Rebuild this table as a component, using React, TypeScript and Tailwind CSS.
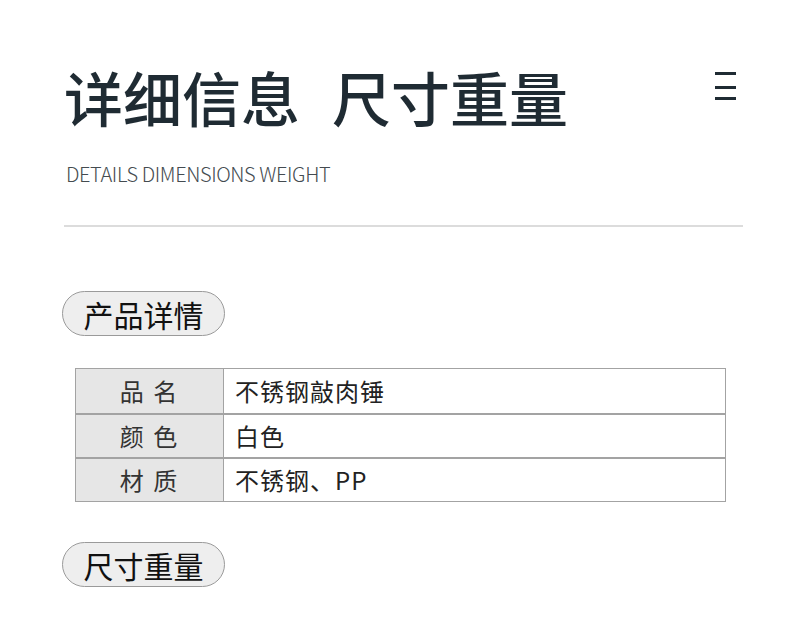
import React from 'react';

const rows = [
  { label: '品 名', value: '不锈钢敲肉锤' },
  { label: '颜 色', value: '白色' },
  { label: '材 质', value: '不锈钢、PP' },
];

const Pill: React.FC<{ text: string }> = ({ text }) => (
  <div className="inline-flex h-[45px] w-[163px] items-center justify-center rounded-full border border-[#9a9a9a] bg-[#eeeeee] text-[30px] leading-none text-[#111]">
    {text}
  </div>
);

export default function App() {
  return (
    <div
      className="h-[617px] w-[800px] bg-white"
      style={{ fontFamily: '"Noto Sans CJK SC", "Noto Sans", sans-serif' }}
    >
      <div className="px-[64px] pt-[59px]">
        <div className="flex items-start justify-between">
          <h1 className="text-[59px] font-medium leading-[76px] text-[#1f2b33]">
            详细信息<span className="ml-[32px]">尺寸重量</span>
          </h1>
          <div className="mt-[13px] flex w-[21px] flex-col">
            <span className="h-[3px] bg-[#1f2b33]" />
            <span className="mt-[11px] h-[3px] bg-[#1f2b33]" />
            <span className="mt-[8px] h-[3px] bg-[#1f2b33]" />
          </div>
        </div>
        <p className="mt-[25px] pl-[2px] text-[20px] font-light leading-[28px] tracking-[-0.4px] text-[#444b50]">
          DETAILS DIMENSIONS WEIGHT
        </p>
        <div className="mt-[37px] h-[2px] w-[679px] bg-[#dcdcdc]" />
      </div>

      <div className="pl-[62px] pt-[64px]">
        <Pill text="产品详情" />
      </div>

      <div className="ml-[75px] mt-[32px] w-[651px] border border-[#a3a3a3]">
        {rows.map((r, i) => (
          <div
            key={r.label}
            className={`flex h-[44px] ${i > 0 ? 'border-t-2 border-[#a3a3a3]' : ''}`}
          >
            <div className="flex w-[148px] items-center justify-center border-r border-[#a3a3a3] bg-[#e6e6e6] text-[24px] tracking-[2px] text-[#333]">
              {r.label}
            </div>
            <div className="flex flex-1 items-center pl-[11px] text-[24px] tracking-[1px] text-[#222]">
              {r.value}
            </div>
          </div>
        ))}
      </div>

      <div className="pl-[62px] pt-[40px]">
        <Pill text="尺寸重量" />
      </div>
    </div>
  );
}
